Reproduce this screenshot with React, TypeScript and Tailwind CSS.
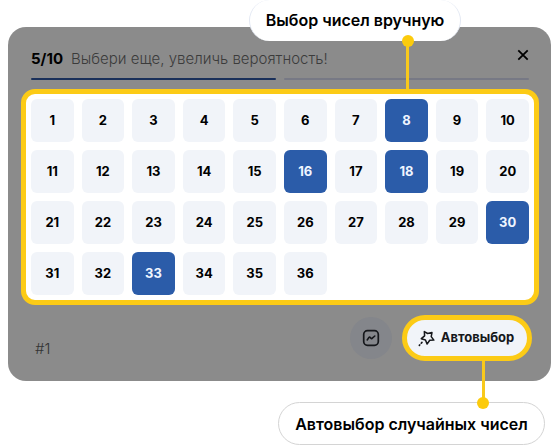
import React, { useState } from "react";
import clsx from "clsx";

const NUMBERS = Array.from({ length: 36 }, (_, i) => i + 1);
const REQUIRED = 10;

const CloseIcon = () => (
  <svg width="12" height="12" viewBox="0 0 12 12" fill="none" aria-hidden="true">
    <path d="M1.3 1.3l9.4 9.4M10.7 1.3l-9.4 9.4" stroke="currentColor" strokeWidth="1.8" />
  </svg>
);

const StatsIcon = () => (
  <svg width="18" height="18" viewBox="0 0 18 18" fill="none" aria-hidden="true">
    <rect x="1.7" y="1.7" width="14.6" height="14.6" rx="3.8" stroke="currentColor" strokeWidth="1.7" />
    <path
      d="M5.2 10.9l1.7-2.3c.4-.6 1-.6 1.4-.1l.6.8c.4.5 1 .5 1.4-.1L12.8 7"
      stroke="currentColor"
      strokeWidth="1.6"
      strokeLinecap="round"
      strokeLinejoin="round"
    />
  </svg>
);

const StarIcon = () => (
  <svg width="17" height="17" viewBox="0 0 18 18" fill="none" aria-hidden="true">
    <path
      d="M6.7 1.7l3.5 2 4.6-1-.8 4.3 2.8 3.7-4.4.2-2.8 4-1.7-4.4-4.4-1.3 3.5-3z"
      stroke="currentColor"
      strokeWidth="1.6"
      strokeLinejoin="round"
    />
    <path d="M4.2 13.1l-2.8 3.2" stroke="currentColor" strokeWidth="1.7" strokeLinecap="round" strokeDasharray="1.2 2.4" />
  </svg>
);

const App = () => {
  const [selected, setSelected] = useState<number[]>([8, 16, 18, 30, 33]);

  const toggleNumber = (value: number) => {
    setSelected((prev) =>
      prev.includes(value)
        ? prev.filter((item) => item !== value)
        : [...prev, value]
    );
  };

  const autoSelect = () => {
    const shuffled = [...NUMBERS].sort(() => Math.random() - 0.5);
    setSelected(shuffled.slice(0, REQUIRED));
  };

  return (
    <main className="bg-white pb-1 font-['Inter',sans-serif] text-black">
      {/* Top callout */}
      <div className="relative z-10 -mb-[14px] flex justify-end pr-24">
        <p className="relative flex h-[41px] w-[212px] items-center justify-center rounded-full border-x border-[#e3e8f3] bg-white pb-0.5 text-base font-semibold whitespace-nowrap">
          Выбор чисел вручную
          <span className="absolute top-[41px] right-[51px] h-12 w-[3px] bg-[#f8c91c]" />
          <span className="absolute top-[35px] right-[46px] size-3 rounded-full bg-[#fccb0c]" />
        </p>
      </div>

      <section className="mr-1.5 ml-2 rounded-[18px] bg-[#8b8b8b] pr-3 pb-5 pl-[13px]">
        <header className="flex h-[51px] items-center justify-between px-2.5 pt-3.5">
          <p className="flex gap-2 text-[15px] whitespace-nowrap">
            <b className="font-bold">
              {selected.length}/{REQUIRED}
            </b>
            <span className="font-light text-[#3b3b3b]">
              Выбери еще, увеличь вероятность!
            </span>
          </p>
          <button type="button" aria-label="Закрыть" className="pb-2.5">
            <CloseIcon />
          </button>
        </header>

        <div className="grid grid-cols-2 gap-2 px-2.5 pb-[9px]">
          <div className="h-0.5 rounded-full bg-[#1a305a]" />
          <div className="h-0.5 rounded-full bg-[#777985]" />
        </div>

        {/* Numbers */}
        <div className="grid grid-cols-10 gap-2 rounded-[14px] border-5 border-[#fccb16] bg-white p-[5px]">
          {NUMBERS.map((value) => (
            <button
              key={value}
              type="button"
              aria-pressed={selected.includes(value)}
              onClick={() => toggleNumber(value)}
              className={clsx(
                "h-[43px] rounded-md text-[13px] font-bold",
                selected.includes(value)
                  ? "bg-[#2b5ca9] text-[#eff5ff]"
                  : "bg-[#f1f4f9]"
              )}
            >
              {value}
            </button>
          ))}
        </div>

        <footer className="flex items-center gap-2.5 pt-2.5 pr-[7px] pl-3.5">
          <span className="mr-auto self-end text-[15px] leading-6 font-light text-[#333333]">
            #1
          </span>
          <button
            type="button"
            aria-label="Статистика"
            className="flex size-[42px] items-center justify-center rounded-full bg-[#84868b] text-[#15171b]"
          >
            <StatsIcon />
          </button>
          <button
            type="button"
            onClick={autoSelect}
            className="relative flex h-[46px] w-[130px] items-center justify-center gap-1.5 rounded-full border-5 border-[#fccb16] bg-[#f1f4f9] pr-0.5 text-[13px] font-bold text-[#15171b]"
          >
            <StarIcon />
            Автовыбор
            <span className="absolute top-[41px] right-[42px] h-10 w-[3px] bg-[#f8c91c]" />
          </button>
        </footer>
      </section>

      {/* Bottom callout */}
      <div className="mt-[21px] flex justify-end pr-3">
        <p className="relative flex h-[43px] w-[267px] items-center justify-center rounded-full border border-[#d4d4d4] bg-white text-base font-semibold whitespace-nowrap">
          Автовыбор случайных чисел
          <span className="absolute -top-1.5 right-[55px] size-3 rounded-full bg-[#fccb0c]" />
        </p>
      </div>
    </main>
  );
};

export default App;
